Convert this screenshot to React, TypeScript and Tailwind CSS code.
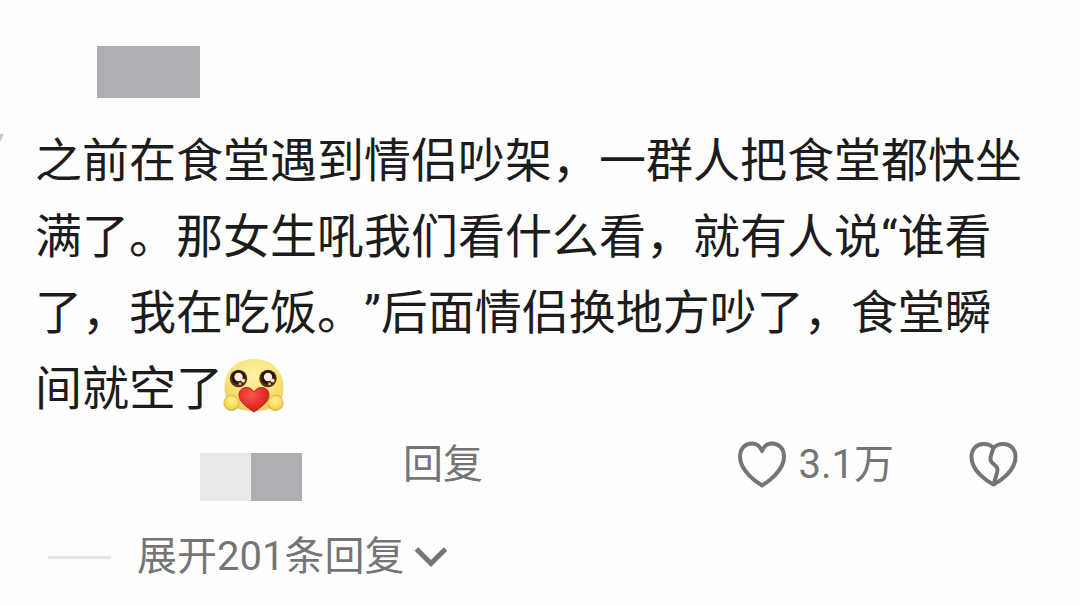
import React from "react";

function HugEmoji() {
  return (
    <svg viewBox="0 0 64 56" className="inline-block h-14 w-16 align-[-9px]" role="img" aria-label="抱抱爱心">
      <defs>
        <radialGradient id="face" cx="0.5" cy="0.3" r="0.75">
          <stop offset="0" stopColor="#fcf1a6" />
          <stop offset="0.6" stopColor="#f8e374" />
          <stop offset="1" stopColor="#efc55f" />
        </radialGradient>
        <radialGradient id="hand" cx="0.5" cy="0.35" r="0.65">
          <stop offset="0" stopColor="#fff08a" />
          <stop offset="0.7" stopColor="#f5dc58" />
          <stop offset="1" stopColor="#d8aa40" />
        </radialGradient>
        <radialGradient id="love" cx="0.4" cy="0.3" r="0.75">
          <stop offset="0" stopColor="#fa5a4c" />
          <stop offset="0.55" stopColor="#e92f2d" />
          <stop offset="1" stopColor="#c01c1f" />
        </radialGradient>
      </defs>
      <path d="M31 1C13 1 1.500 13 1.500 29C1.500 44 8 53 31 53S60.500 44 60.500 29C60.500 13 49 1 31 1Z" fill="url(#face)" />
      {[15.5, 45].map((x) => (
        <g key={x}>
          <circle cx={x} cy="20.500" r="8.700" fill="#5a3218" />
          <circle cx={x} cy="19.500" r="7" fill="#2c140a" />
          <circle cx={x} cy="19" r="4.200" fill="#fff0e2" />
          <circle cx={x + 4.5} cy="22.500" r="2" fill="#ffe3cc" />
          <circle cx={x + 1.5} cy="25.800" r="1.500" fill="#d6a07c" />
        </g>
      ))}
      <circle cx="8.500" cy="45" r="7.600" fill="url(#hand)" stroke="#dcab3d" strokeWidth="0.800" />
      <circle cx="52.500" cy="45" r="7.600" fill="url(#hand)" stroke="#dcab3d" strokeWidth="0.800" />
      <path
        d="M31 54C23 48.500 16 43.500 16 37C16 32 19.500 29.500 23.500 29.500C27 29.500 29.500 31.500 31 34C32.500 31.500 35 29.500 38.500 29.500C42.500 29.500 46 32 46 37C46 43.500 39 48.500 31 54Z"
        fill="url(#love)"
        stroke="#b32a1e"
        strokeWidth="1"
      />
    </svg>
  );
}

function Heart() {
  return (
    <svg viewBox="0 0 50 48" className="h-12 w-[50px]" fill="none" stroke="#757575" strokeWidth="4" strokeLinejoin="round" aria-hidden="true">
      <path d="M25 44.500C20 41.500 3 30 3 15.500C3 7 8.500 2.500 15 2.500C19.500 2.500 23 5 25 10C27 5 30.500 2.500 35 2.500C41.500 2.500 47 7 47 15.500C47 30 30 41.500 25 44.500Z" />
    </svg>
  );
}

function BrokenHeart() {
  return (
    <svg viewBox="0 0 50 48" className="h-12 w-[50px]" fill="none" stroke="#757575" strokeWidth="4" strokeLinejoin="round" strokeLinecap="round" aria-hidden="true">
      <path d="M24.500 43.500C18.500 40.500 2.500 30 2.500 16C2.500 7.500 8 3 14.500 3C18.500 3 22.500 4.500 24.500 7C26.500 4.500 30.500 3 34.500 3C41 3 46.500 7.500 46.500 16C46.500 30 30.500 40.500 24.500 43.500Z" />
      <path d="M24.500 7C23 12 21 15 21.500 19C22 22.500 28.500 24.500 28.500 28.500C28.500 33 25.500 38 25 43" />
    </svg>
  );
}

export default function App() {
  return (
    <main className="min-h-screen overflow-hidden bg-[#fefefe] font-['Roboto','Noto_Sans_CJK_SC',sans-serif] text-[#1c1c1c] [text-spacing-trim:space-all]">
      <svg viewBox="0 0 4 16" className="absolute left-0 top-[130px] h-4 w-1" aria-hidden="true">
        <path d="M0 4H3.500L1 11H0Z" fill="#c8c8c8" />
      </svg>
      <article className="pl-[35px] pr-[50px] pt-[46px]">
        <header className="pl-[62px]">
          <div className="h-[52px] w-[103px] bg-[#afaeb2]" />
        </header>
        <p className="mt-[25px] text-[47px] leading-[76px]">
          之前在食堂遇到情侣吵架，一群人把食堂都快坐满了。那女生吼我们看什么看，就有人说“谁看了，我在吃饭。”后面情侣换地方吵了，食堂瞬间就空了
          <HugEmoji />
        </p>
        <div className="mt-2 flex h-[60px] items-center pl-[165px] pr-[11px] text-[40px] leading-[60px] text-[#757575]">
          <div className="mt-6 flex h-12">
            <div className="w-[51px] bg-[#e9e9e9]" />
            <div className="w-[51px] bg-[#afaeb2]" />
          </div>
          <button type="button" className="ml-[101px]">回复</button>
          <button type="button" className="ml-auto flex items-center gap-[11px]">
            <Heart />
            3.1万
          </button>
          <button type="button" className="ml-[75px]" aria-label="不喜欢">
            <BrokenHeart />
          </button>
        </div>
        <button type="button" className="mt-8 flex items-center pl-[13px] text-[40px] leading-[60px] text-[#757575]">
          <span className="mr-[26px] h-[3px] w-[63px] bg-[#e4e4e4]" />
          展开201条回复
          <svg viewBox="0 0 34 22" className="ml-[10px] h-[22px] w-[34px]" fill="none" stroke="#757575" strokeWidth="5" aria-hidden="true">
            <path d="M2.500 3L17 17.500L31.500 3" />
          </svg>
        </button>
      </article>
    </main>
  );
}
